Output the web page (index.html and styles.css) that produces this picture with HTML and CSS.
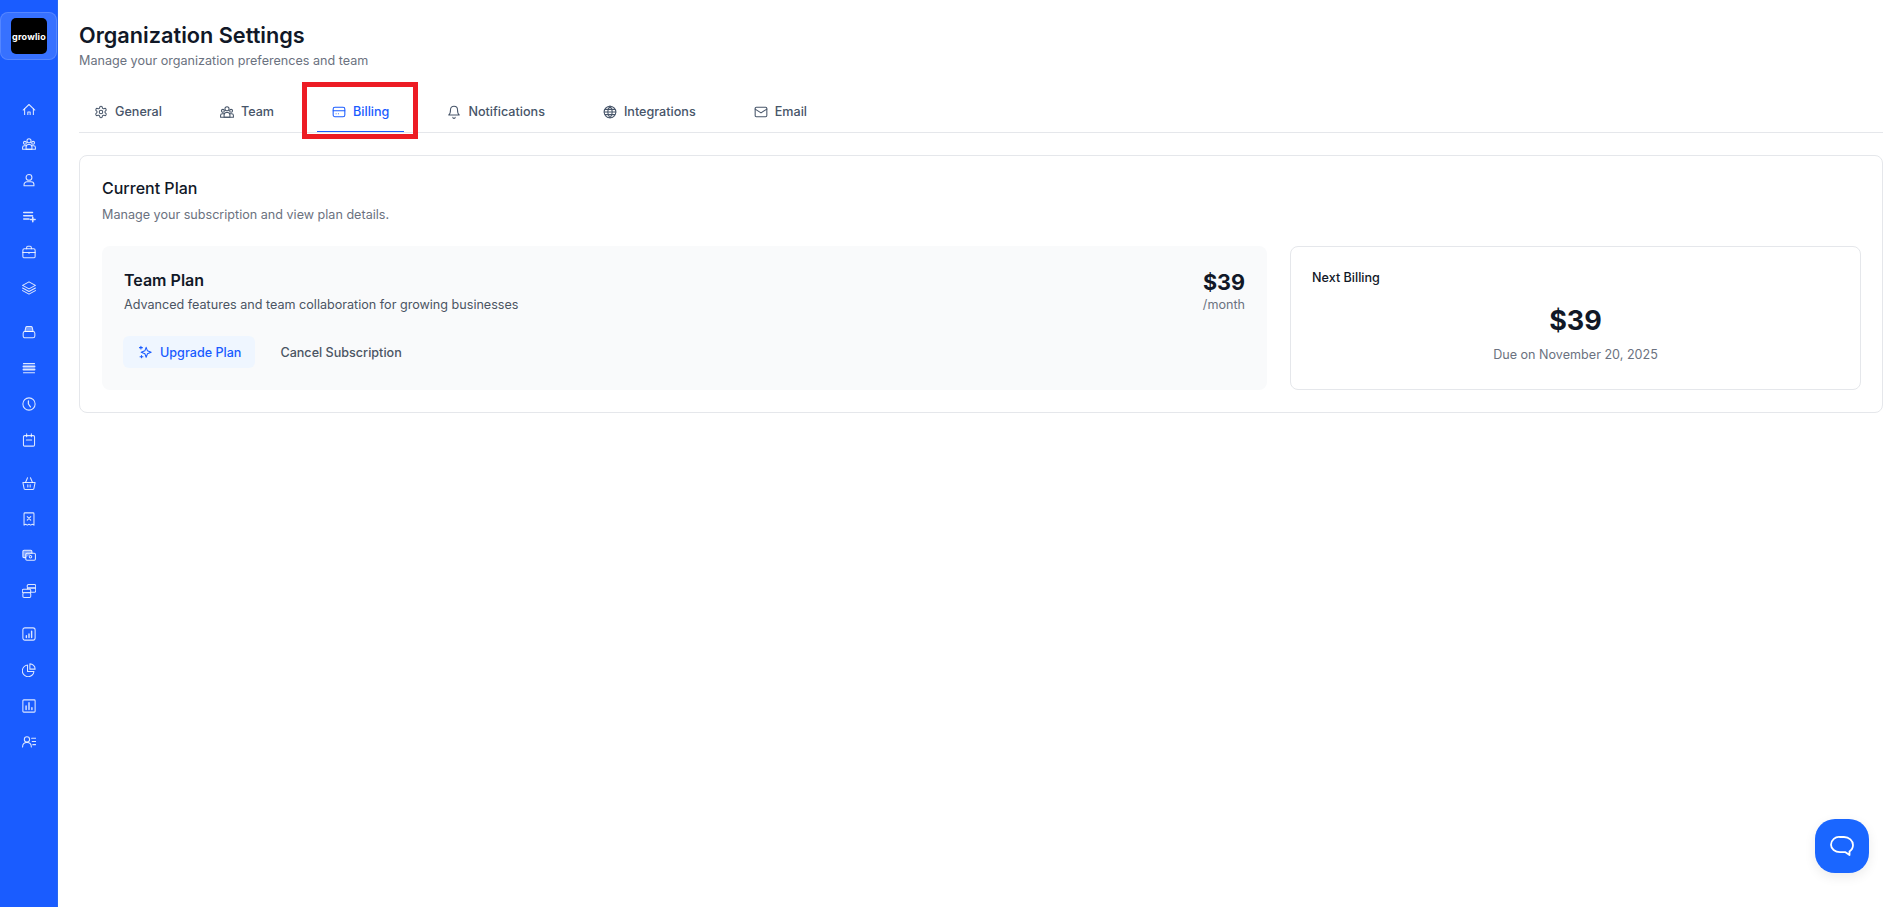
FILE: index.html
```html
<!DOCTYPE html>
<html lang="en">
<head>
  <meta charset="UTF-8">
  <meta name="viewport" content="width=device-width, initial-scale=1.0">
  <title>Organization Settings</title>
  <link rel="stylesheet" href="styles.css">
</head>
<body>
  <aside class="sidebar">
    <div class="logo-box"><div class="logo">growlio</div></div>
    <nav class="side-nav">
      <div class="side-group">
        <a class="side-item"><svg viewBox="0 -4 24 24"><path d="M2 11.500L12 2l10 9.500"/><path d="M4.500 9.500V20a1 1 0 0 0 1 1h13a1 1 0 0 0 1-1V9.500"/><path d="M10 21v-6h4v6"/></svg></a>
        <a class="side-item"><svg viewBox="0 0 24 24"><circle cx="12" cy="6.500" r="3.500"/><circle cx="5" cy="10" r="2.500"/><circle cx="19" cy="10" r="2.500"/><path d="M7 21v-4a4 4 0 0 1 4-4h2a4 4 0 0 1 4 4v4z"/><path d="M1 21v-3a3 3 0 0 1 3-3h3M23 21v-3a3 3 0 0 0-3-3h-3M1 21h22"/></svg></a>
        <a class="side-item"><svg viewBox="0 0 24 24"><circle cx="12" cy="7.500" r="5"/><path d="M3.500 22v-2a5 5 0 0 1 5-5h7a5 5 0 0 1 5 5v2z"/></svg></a>
        <a class="side-item"><svg viewBox="0 0 24 24"><path d="M3 6h15M3 11.500h15M3 17h9M18.500 14v8M14.500 18h8" stroke-width="2.600"/></svg></a>
        <a class="side-item"><svg viewBox="0 0 24 24"><rect x="1.500" y="6.500" width="21" height="15.500" rx="2.500"/><path d="M8 6.500V4a2 2 0 0 1 2-2h4a2 2 0 0 1 2 2v2.500M1.500 13h21M12 12.500v2"/></svg></a>
        <a class="side-item"><svg viewBox="0 0 24 24"><path d="M12 1.500L23 7.500l-11 6-11-6z"/><path d="M1 12l11 6 11-6M1 16.500l11 6 11-6"/></svg></a>
      </div>
      <div class="side-group">
        <a class="side-item"><svg viewBox="0 0 24 24"><rect x="2" y="11" width="20" height="11" rx="3"/><path class="tint" d="M5 11l1.500-7a2 2 0 0 1 2-1.500h7a2 2 0 0 1 2 1.500L19 11z"/></svg></a>
        <a class="side-item"><svg viewBox="0 0 24 24"><path d="M2.500 4.500h19M2.500 20h19"/><path d="M2.500 9.500h19M2.500 14.500h19" stroke-width="3.200"/></svg></a>
        <a class="side-item"><svg viewBox="0 0 24 24"><circle cx="12" cy="12" r="10.500"/><path d="M11 6.500V12l3.500 5" stroke-width="2.200"/></svg></a>
        <a class="side-item"><svg viewBox="0 0 24 24"><rect x="2.500" y="4.500" width="19" height="18" rx="2"/><path d="M8 1.500v5M16 1.500v5M7.500 12h9"/></svg></a>
      </div>
      <div class="side-group">
        <a class="side-item"><svg viewBox="0 -1 24 24"><path d="M1.500 10h21l-2 10a2 2 0 0 1-2 2h-13a2 2 0 0 1-2-2z"/><path d="M6 10l3.500-8M18 10l-3.500-8M10 14v4M14 14v4"/></svg></a>
        <a class="side-item"><svg viewBox="0 0 24 24"><path d="M3.500 3a1.500 1.500 0 0 1 1.500-1.500h14A1.500 1.500 0 0 1 20.500 3v19.500l-2.800-1.500-2.800 1.500-2.900-1.500-2.900 1.500-2.800-1.500-2.800 1.500z"/><path d="M9 8l6 6M15 8l-6 6"/></svg></a>
        <a class="side-item"><svg viewBox="0 0 24 24"><path class="tint" d="M6 16.500H3.500a2 2 0 0 1-2-2V6a2 2 0 0 1 2-2H15a2 2 0 0 1 2 2v3"/><rect x="6.500" y="9" width="16.500" height="12" rx="2"/><circle cx="14.500" cy="15" r="2.200"/></svg></a>
        <a class="side-item"><svg viewBox="0 0 24 24"><rect x="9" y="1" width="14.500" height="6" rx="2"/><rect x="9" y="7" width="14.500" height="7" rx="2"/><rect class="solid" x="0.500" y="9" width="14.500" height="6" rx="2"/><rect class="solid" x="1.500" y="15" width="13.500" height="8" rx="2"/></svg></a>
      </div>
      <div class="side-group">
        <a class="side-item"><svg viewBox="0 0 24 24"><rect x="1.500" y="1.500" width="21" height="21" rx="3.500"/><path d="M7.500 18v-3M12 18v-6M16.500 18V7" stroke-width="2.400"/></svg></a>
        <a class="side-item"><svg viewBox="0 0 24 24"><path d="M9.500 3.500a10 10 0 1 0 11 11h-11z"/><path d="M13.500 1.500a9 9 0 0 1 9 9h-9z"/></svg></a>
        <a class="side-item"><svg viewBox="0 0 24 24"><rect x="1.500" y="1.500" width="21" height="21" rx="1.500"/><path d="M7 18v-6M12 18V6.500M17 18v-3" stroke-width="2.400"/></svg></a>
        <a class="side-item"><svg viewBox="0 0 24 24"><circle cx="8.500" cy="7.500" r="4.500"/><path d="M1 20.500c0-4.500 3-7.500 7.500-7.500s7.500 3 7.500 7.500M16.500 5.500h7M17.500 11h6M18.500 16.500h5"/></svg></a>
      </div>
    </nav>
  </aside>

  <main class="content">
    <h1 class="page-title">Organization Settings</h1>
    <p class="page-sub">Manage your organization preferences and team</p>

    <div class="tabs">
      <a class="tab"><svg viewBox="0 0 24 24"><circle cx="12" cy="12" r="3"/><path d="M12.200 2h-.4a2 2 0 0 0-2 2v.2a2 2 0 0 1-1 1.700l-.4.300a2 2 0 0 1-2 0l-.2-.1a2 2 0 0 0-2.700.7l-.2.400a2 2 0 0 0 .7 2.700l.2.100a2 2 0 0 1 1 1.700v.5a2 2 0 0 1-1 1.700l-.2.100a2 2 0 0 0-.7 2.700l.2.400a2 2 0 0 0 2.700.7l.2-.1a2 2 0 0 1 2 0l.4.300a2 2 0 0 1 1 1.700v.2a2 2 0 0 0 2 2h.4a2 2 0 0 0 2-2v-.2a2 2 0 0 1 1-1.700l.4-.3a2 2 0 0 1 2 0l.2.100a2 2 0 0 0 2.700-.7l.2-.4a2 2 0 0 0-.7-2.700l-.2-.1a2 2 0 0 1-1-1.700v-.5a2 2 0 0 1 1-1.700l.2-.1a2 2 0 0 0 .7-2.700l-.2-.4a2 2 0 0 0-2.700-.7l-.2.100a2 2 0 0 1-2 0l-.4-.3a2 2 0 0 1-1-1.700V4a2 2 0 0 0-2-2z"/></svg>General</a>
      <a class="tab"><svg viewBox="0 0 24 24"><circle cx="12" cy="6.500" r="3.500"/><circle cx="5" cy="10" r="2.500"/><circle cx="19" cy="10" r="2.500"/><path d="M7 21v-4a4 4 0 0 1 4-4h2a4 4 0 0 1 4 4v4z"/><path d="M1 21v-3a3 3 0 0 1 3-3h3M23 21v-3a3 3 0 0 0-3-3h-3M1 21h22"/></svg>Team</a>
      <a class="tab active"><svg viewBox="0 0 24 24"><rect x="2" y="4" width="20" height="16" rx="3"/><path d="M2 10h20M7 15h.01M11 15h.01"/></svg>Billing<span class="highlight"></span></a>
      <a class="tab"><svg viewBox="0 0 24 24"><path d="M6 8a6 6 0 0 1 12 0c0 7 3 9 3 9H3s3-2 3-9"/><path d="M10 21a2 2 0 0 0 4 0"/></svg>Notifications</a>
      <a class="tab"><svg viewBox="0 0 24 24"><circle cx="12" cy="12" r="10"/><path d="M2 12h20M12 2a15 15 0 0 1 0 20M12 2a15 15 0 0 0 0 20M3.500 7.500h17M3.500 16.500h17"/></svg>Integrations</a>
      <a class="tab"><svg viewBox="0 0 24 24"><rect x="2" y="4" width="20" height="16" rx="2"/><path d="M2 7l10 6.500L22 7"/></svg>Email</a>
    </div>

    <section class="card">
      <h2 class="card-title">Current Plan</h2>
      <p class="card-sub">Manage your subscription and view plan details.</p>
      <div class="plan-grid">
        <div class="plan-box">
          <div class="plan-top">
            <div>
              <div class="plan-name">Team Plan</div>
              <div class="plan-desc">Advanced features and team collaboration for growing businesses</div>
            </div>
            <div class="plan-price">
              <div class="price">$39</div>
              <div class="per">/month</div>
            </div>
          </div>
          <div class="plan-actions">
            <button class="btn btn-upgrade"><svg viewBox="0 0 24 24"><path d="M14 4l2.200 6L22.500 12.500 16.200 15 14 21l-2.200-6-6.300-2.500 6.300-2.500z"/><path d="M5 2v5M2.500 4.500h5M6 18v4M3.500 20h5"/></svg>Upgrade Plan</button>
            <button class="btn btn-cancel">Cancel Subscription</button>
          </div>
        </div>
        <div class="billing-box">
          <div class="billing-label">Next Billing</div>
          <div class="billing-amount">$39</div>
          <div class="billing-due">Due on November 20, 2025</div>
        </div>
      </div>
    </section>
  </main>

  <button class="chat-btn"><svg viewBox="0 0 24 24"><path d="M10 3h4a9 8 0 0 1 9 8 8 8 0 0 1-3.500 6.500V21l-4-2.800H10a9 7.500 0 0 1-9-7.500A8 8 0 0 1 10 3z"/></svg></button>
</body>
</html>
```

FILE: styles.css
```css
* {
  box-sizing: border-box;
}
body {
  margin: 0;
  height: 907px;
  display: flex;
  overflow: hidden;
  font-family: Inter, "Liberation Sans", sans-serif;
  color: #111827;
  background: #fff;
}
svg {
  fill: none;
  stroke: currentColor;
  stroke-width: 1.8;
  stroke-linecap: round;
  stroke-linejoin: round;
  flex: none;
}

/* sidebar */
.sidebar {
  width: 58px;
  flex: none;
  background: #1a5cff;
  border-right: 1px solid #2a68f0;
  padding-top: 12px;
}
.logo-box {
  height: 48px;
  padding-left: 10px;
  display: flex;
  align-items: center;
  border: 1px solid rgba(255, 255, 255, 0.15);
  border-radius: 8px;
  background: rgba(255, 255, 255, 0.13);
}
.logo {
  width: 36px;
  height: 36px;
  border-radius: 5px;
  background: #000;
  color: #fff;
  font-size: 9px;
  font-weight: 700;
  letter-spacing: 0.2px;
  display: flex;
  align-items: center;
  justify-content: center;
}
.side-nav {
  margin-top: 30px;
}
.side-group {
  margin-bottom: 7px;
}
.side-group:first-child {
  margin-bottom: 8px;
}
.side-item {
  height: 36px;
  display: flex;
  align-items: center;
  justify-content: center;
  color: rgba(255, 255, 255, 0.85);
}
.side-item svg {
  width: 14px;
  height: 14px;
}
.side-item .tint {
  fill: rgba(255, 255, 255, 0.4);
}
.side-item .solid {
  fill: #1a5cff;
}

/* main */
.content {
  flex: 1;
  min-width: 0;
  padding: 21px 21px 0 21px;
}
.page-title {
  margin: 0;
  font-size: 21.7px;
  line-height: 28px;
  font-weight: 600;
}
.page-sub {
  margin: 2px 0 0;
  font-size: 12.6px;
  line-height: 20px;
  color: #6b7280;
}
.tabs {
  display: flex;
  gap: 28px;
  height: 43px;
  margin-top: 19px;
  border-bottom: 1px solid #e5e7eb;
}
.tab {
  position: relative;
  display: flex;
  align-items: center;
  gap: 7px;
  height: 42px;
  padding: 2px 15px 0;
  border-bottom: 1px solid transparent;
  font-size: 12.6px;
  font-weight: 500;
  color: #475569;
}
.tab svg {
  width: 14px;
  height: 14px;
}
.tab.active {
  color: #1a5cff;
  border-bottom-color: #1a5cff;
}
/* red annotation box over the active tab */
.highlight {
  position: absolute;
  left: -15px;
  right: -14px;
  top: -8px;
  height: 57px;
  border: 5px solid #ed1c24;
}

.card {
  margin-top: 22px;
  padding: 21px 21px 21px 22px;
  height: 258px;
  border: 1px solid #e5e7eb;
  border-radius: 8px;
}
.card-title {
  margin: 0;
  font-size: 16px;
  line-height: 22px;
  font-weight: 500;
}
.card-sub {
  margin: 6px 0 0;
  font-size: 12.6px;
  line-height: 20px;
  color: #6b7280;
}
.plan-grid {
  display: grid;
  grid-template-columns: 1fr 571px;
  gap: 23px;
  margin-top: 21px;
}
.plan-box {
  height: 144px;
  padding: 22px;
  background: #f9fafb;
  border-radius: 8px;
}
.plan-top {
  display: flex;
  justify-content: space-between;
}
.plan-name {
  font-size: 16px;
  line-height: 24px;
  font-weight: 600;
}
.plan-desc {
  margin-top: 3px;
  font-size: 12.6px;
  line-height: 20px;
  color: #4b5563;
}
.plan-price {
  text-align: right;
}
.price {
  font-size: 21.6px;
  line-height: 28px;
  font-weight: 700;
}
.per {
  font-size: 12.6px;
  line-height: 18px;
  color: #6b7280;
}
.plan-actions {
  display: flex;
  gap: 13px;
  margin-top: 21px;
  margin-left: -1px;
}
.btn {
  height: 32px;
  display: flex;
  align-items: center;
  gap: 8px;
  border: none;
  border-radius: 6px;
  font-family: inherit;
  font-size: 12.6px;
  font-weight: 500;
  background: none;
  padding: 0 12px;
}
.btn svg {
  width: 14px;
  height: 14px;
}
.btn-upgrade {
  background: #eff6ff;
  color: #1a5cff;
  padding: 0 14px 0 15px;
}
.btn-cancel {
  color: #4b5563;
}
.billing-box {
  height: 144px;
  padding: 21px;
  background: #fff;
  border: 1px solid #e5e7eb;
  border-radius: 8px;
}
.billing-label {
  font-size: 12.6px;
  line-height: 20px;
  font-weight: 500;
}
.billing-amount {
  margin-top: 15px;
  text-align: center;
  font-size: 27px;
  line-height: 36px;
  font-weight: 700;
}
.billing-due {
  margin-top: 6px;
  text-align: center;
  font-size: 12.6px;
  line-height: 20px;
  color: #6b7280;
}

.chat-btn {
  position: fixed;
  left: 1815px;
  top: 819px;
  width: 54px;
  height: 54px;
  padding: 0;
  border: none;
  border-radius: 20px;
  background: #1a66ff;
  color: #fff;
  display: flex;
  align-items: center;
  justify-content: center;
  box-shadow: 0 4px 12px rgba(0, 0, 0, 0.08);
}
.chat-btn svg {
  width: 24px;
  height: 24px;
}
```
